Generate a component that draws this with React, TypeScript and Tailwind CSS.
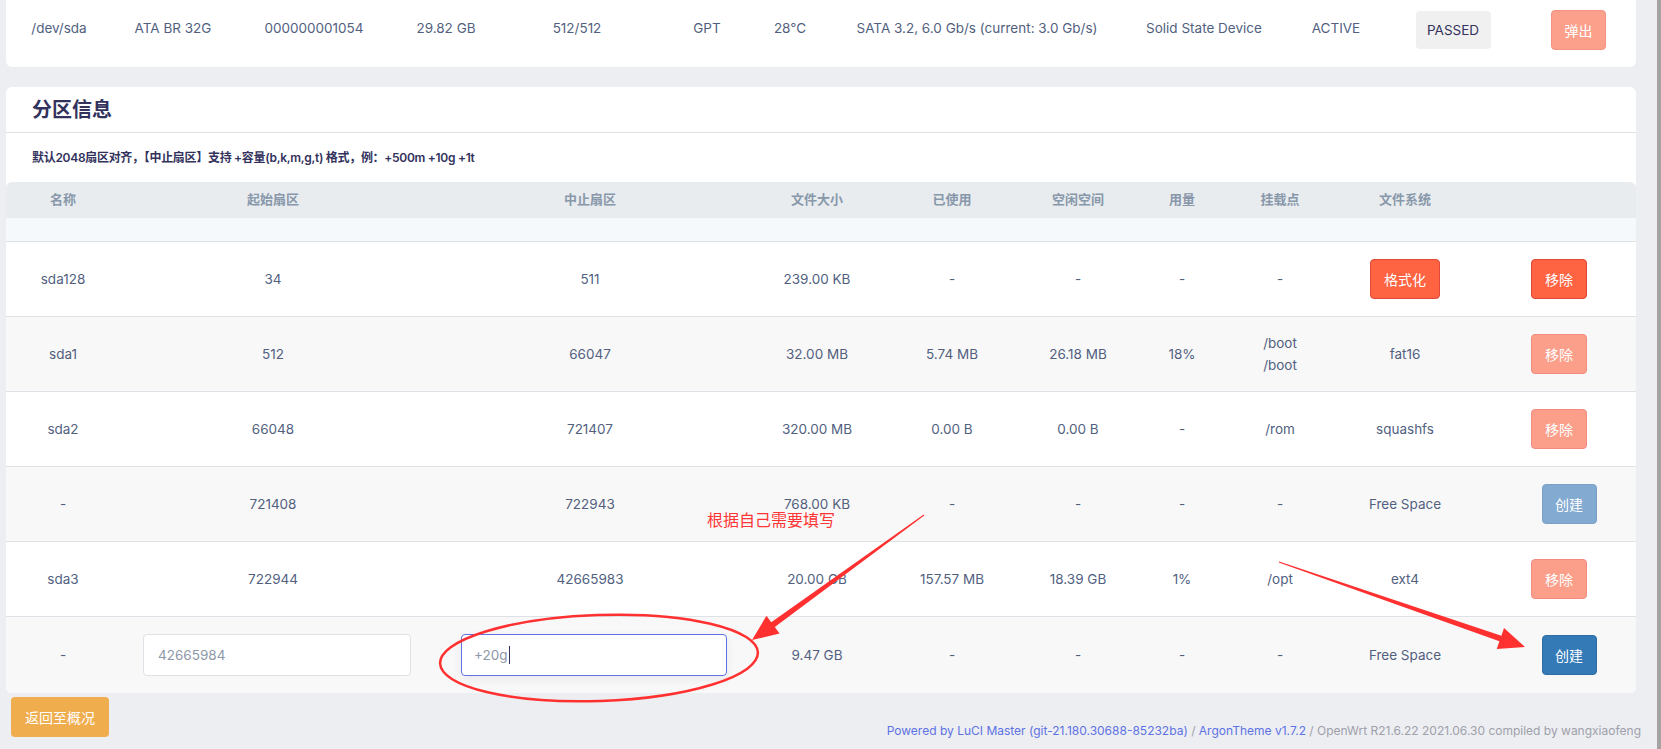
import React from 'react';

const font = { fontFamily: 'Inter, "Noto Sans CJK SC", sans-serif' };

type Row = {
  name: string;
  start: string;
  end: string;
  size: string;
  used: string;
  free: string;
  usage: string;
  mount: string[];
  fs: string;
  action: 'remove' | 'remove-dim' | 'create' | 'create-dim';
  striped: boolean;
};

const rows: Row[] = [
  { name: 'sda128', start: '34', end: '511', size: '239.00 KB', used: '-', free: '-', usage: '-', mount: ['-'], fs: 'FORMAT', action: 'remove', striped: false },
  { name: 'sda1', start: '512', end: '66047', size: '32.00 MB', used: '5.74 MB', free: '26.18 MB', usage: '18%', mount: ['/boot', '/boot'], fs: 'fat16', action: 'remove-dim', striped: true },
  { name: 'sda2', start: '66048', end: '721407', size: '320.00 MB', used: '0.00 B', free: '0.00 B', usage: '-', mount: ['/rom'], fs: 'squashfs', action: 'remove-dim', striped: false },
  { name: '-', start: '721408', end: '722943', size: '768.00 KB', used: '-', free: '-', usage: '-', mount: ['-'], fs: 'Free Space', action: 'create-dim', striped: true },
  { name: 'sda3', start: '722944', end: '42665983', size: '20.00 GB', used: '157.57 MB', free: '18.39 GB', usage: '1%', mount: ['/opt'], fs: 'ext4', action: 'remove-dim', striped: false },
];

const grid = 'grid grid-cols-[114px_306px_328px_126px_144px_108px_100px_96px_154px_154px]';

function ActionButton({ kind }: { kind: Row['action'] }) {
  if (kind === 'remove')
    return <button className="w-[56px] h-[40px] rounded-[4px] bg-[#fe6342] border border-[#e0483a] text-white text-[14px]">移除</button>;
  if (kind === 'remove-dim')
    return <button className="w-[56px] h-[40px] rounded-[4px] bg-[#fb9f8a] border border-[#f38b7f] text-white text-[14px]">移除</button>;
  if (kind === 'create-dim')
    return <button className="ml-[20px] w-[55px] h-[40px] rounded-[4px] bg-[#83aad0] border border-[#7aa0c8] text-white text-[14px]">创建</button>;
  return <button className="ml-[20px] w-[55px] h-[40px] rounded-[4px] bg-[#337ab7] border border-[#2e6da4] text-white text-[14px]">创建</button>;
}

function Cell({ children }: { children: React.ReactNode }) {
  return <div className="flex flex-col items-center justify-center">{children}</div>;
}

export default function App() {
  return (
    <div style={font} className="relative w-[1661px] h-[749px] overflow-hidden bg-[#eceef2] flex">
      <div className="w-[1657px] flex flex-col">
        <div className="pl-[6px] pr-[21px]">
          {/* disk card */}
          <div className="h-[67px] bg-white rounded-b-md flex items-start pt-[10px] text-[13.5px] text-[#525f7f]">
            <div className="w-[106px] h-[37px] flex items-center justify-center">/dev/sda</div>
            <div className="w-[122px] h-[37px] flex items-center justify-center">ATA BR 32G</div>
            <div className="w-[160px] h-[37px] flex items-center justify-center">000000001054</div>
            <div className="w-[104px] h-[37px] flex items-center justify-center">29.82 GB</div>
            <div className="w-[158px] h-[37px] flex items-center justify-center">512/512</div>
            <div className="w-[102px] h-[37px] flex items-center justify-center">GPT</div>
            <div className="w-[64px] h-[37px] flex items-center justify-center">28°C</div>
            <div className="w-[310px] h-[37px] flex items-center justify-center">SATA 3.2, 6.0 Gb/s (current: 3.0 Gb/s)</div>
            <div className="w-[144px] h-[37px] flex items-center justify-center">Solid State Device</div>
            <div className="w-[120px] h-[37px] flex items-center justify-center">ACTIVE</div>
            <div className="w-[114px] h-[40px] flex items-center justify-center">
              <span className="w-[75px] h-[38px] rounded-[4px] bg-[#f0f0f0] text-[#32325d] flex items-center justify-center">PASSED</span>
            </div>
            <div className="flex-1 h-[40px] flex items-center pl-[41px]">
              <button className="w-[55px] h-[40px] rounded-[4px] bg-[#fca08b] border border-[#f59382] text-white text-[14px]">弹出</button>
            </div>
          </div>

          {/* partition card */}
          <div className="mt-[20px] bg-white rounded-md overflow-hidden">
            <div className="h-[46px] px-[26px] flex items-center text-[20px] font-bold text-[#32325d] border-b border-[#dee2e6]">
              分区信息
            </div>
            <div className="h-[49px] px-[26px] flex items-center text-[12px] font-semibold tracking-[-0.3px] text-[#32325d]">
              默认2048扇区对齐，【中止扇区】支持 +容量(b,k,m,g,t) 格式，例：+500m +10g +1t
            </div>
            <div className={`${grid} h-[36px] bg-[#e9ecef] rounded-t-md text-[13px] font-semibold text-[#8898aa]`}>
              {['名称', '起始扇区', '中止扇区', '文件大小', '已使用', '空闲空间', '用量', '挂载点', '文件系统', ''].map((h, i) => (
                <div key={i} className="flex items-center justify-center">{h}</div>
              ))}
            </div>
            <div className="h-[24px] bg-[#f6f9fc] border-b border-[#dee2e6]" />

            {rows.map((r, i) => (
              <div
                key={i}
                className={`${grid} h-[75px] border-b border-[#dee2e6] text-[13.5px] text-[#525f7f] ${r.striped ? 'bg-[#f8f8f8]' : 'bg-white'}`}
              >
                <Cell>{r.name}</Cell>
                <Cell>{r.start}</Cell>
                <Cell>{r.end}</Cell>
                <Cell>{r.size}</Cell>
                <Cell>{r.used}</Cell>
                <Cell>{r.free}</Cell>
                <Cell>{r.usage}</Cell>
                <Cell>
                  {r.mount.map((m, j) => (
                    <div key={j} className="leading-[22px]">{m}</div>
                  ))}
                </Cell>
                <Cell>
                  {r.fs === 'FORMAT' ? (
                    <button className="w-[70px] h-[40px] rounded-[4px] bg-[#fe6342] border border-[#e0483a] text-white text-[14px]">格式化</button>
                  ) : (
                    r.fs
                  )}
                </Cell>
                <Cell>
                  <ActionButton kind={r.action} />
                </Cell>
              </div>
            ))}

            <div className={`${grid} h-[76px] bg-[#f8f8f8] text-[13.5px] text-[#525f7f]`}>
              <Cell>-</Cell>
              <div className="flex items-center pl-[23px]">
                <div className="w-[268px] h-[42px] rounded-[4px] border border-[#dee2e6] bg-white flex items-center pl-[14px] text-[#8d97a8]">
                  42665984
                </div>
              </div>
              <div className="flex items-center pl-[35px]">
                <div className="w-[266px] h-[42px] rounded-[4px] border border-[#5e72e4] bg-white flex items-center pl-[12px] text-[#8d97a8] shadow-[0_3px_9px_rgba(50,50,93,0.08)]">
                  +20g<span className="w-px h-[18px] bg-[#32325d] ml-px" />
                </div>
              </div>
              <Cell>9.47 GB</Cell>
              <Cell>-</Cell>
              <Cell>-</Cell>
              <Cell>-</Cell>
              <Cell>-</Cell>
              <Cell>Free Space</Cell>
              <Cell>
                <ActionButton kind="create" />
              </Cell>
            </div>
          </div>

          {/* footer */}
          <div className="flex items-start justify-between">
            <button className="mt-[4px] ml-[5px] w-[98px] h-[40px] rounded-[4px] bg-[#f0ad4e] text-white text-[14px]">返回至概况</button>
            <div className="mt-[29px] mr-[-5px] text-[12px] text-[#a0a0aa]">
              <span className="text-[#5e72e4]">Powered by LuCI Master (git-21.180.30688-85232ba)</span>
              {' / '}
              <span className="text-[#5e72e4]">ArgonTheme v1.7.2</span>
              {' / OpenWrt R21.6.22 2021.06.30 compiled by wangxiaofeng'}
            </div>
          </div>
        </div>
      </div>
      <div className="w-[4px] bg-[#a3a3a3]" />

      {/* annotations */}
      <div className="absolute left-[707px] top-[510px] text-[16px] text-[#ff3535] leading-[20px]">根据自己需要填写</div>
      <svg className="absolute left-0 top-0 pointer-events-none" width="1661" height="749">
        <ellipse cx="599" cy="658" rx="159" ry="43" fill="none" stroke="#ff3030" strokeWidth="2.5" transform="rotate(-2 599 658)" />
        <polygon
          fill="#ff3030"
          points="923.7,514.6 771.2,622.3 766.5,615.8 752,640 779.5,633.6 774.8,627.1 924.3,515.4"
        />
        <polygon
          fill="#ff3030"
          points="1279.2,561.5 1501.4,635.7 1504,628.1 1525,647 1496.8,648.9 1499.4,641.3 1278.8,562.5"
        />
      </svg>
    </div>
  );
}
